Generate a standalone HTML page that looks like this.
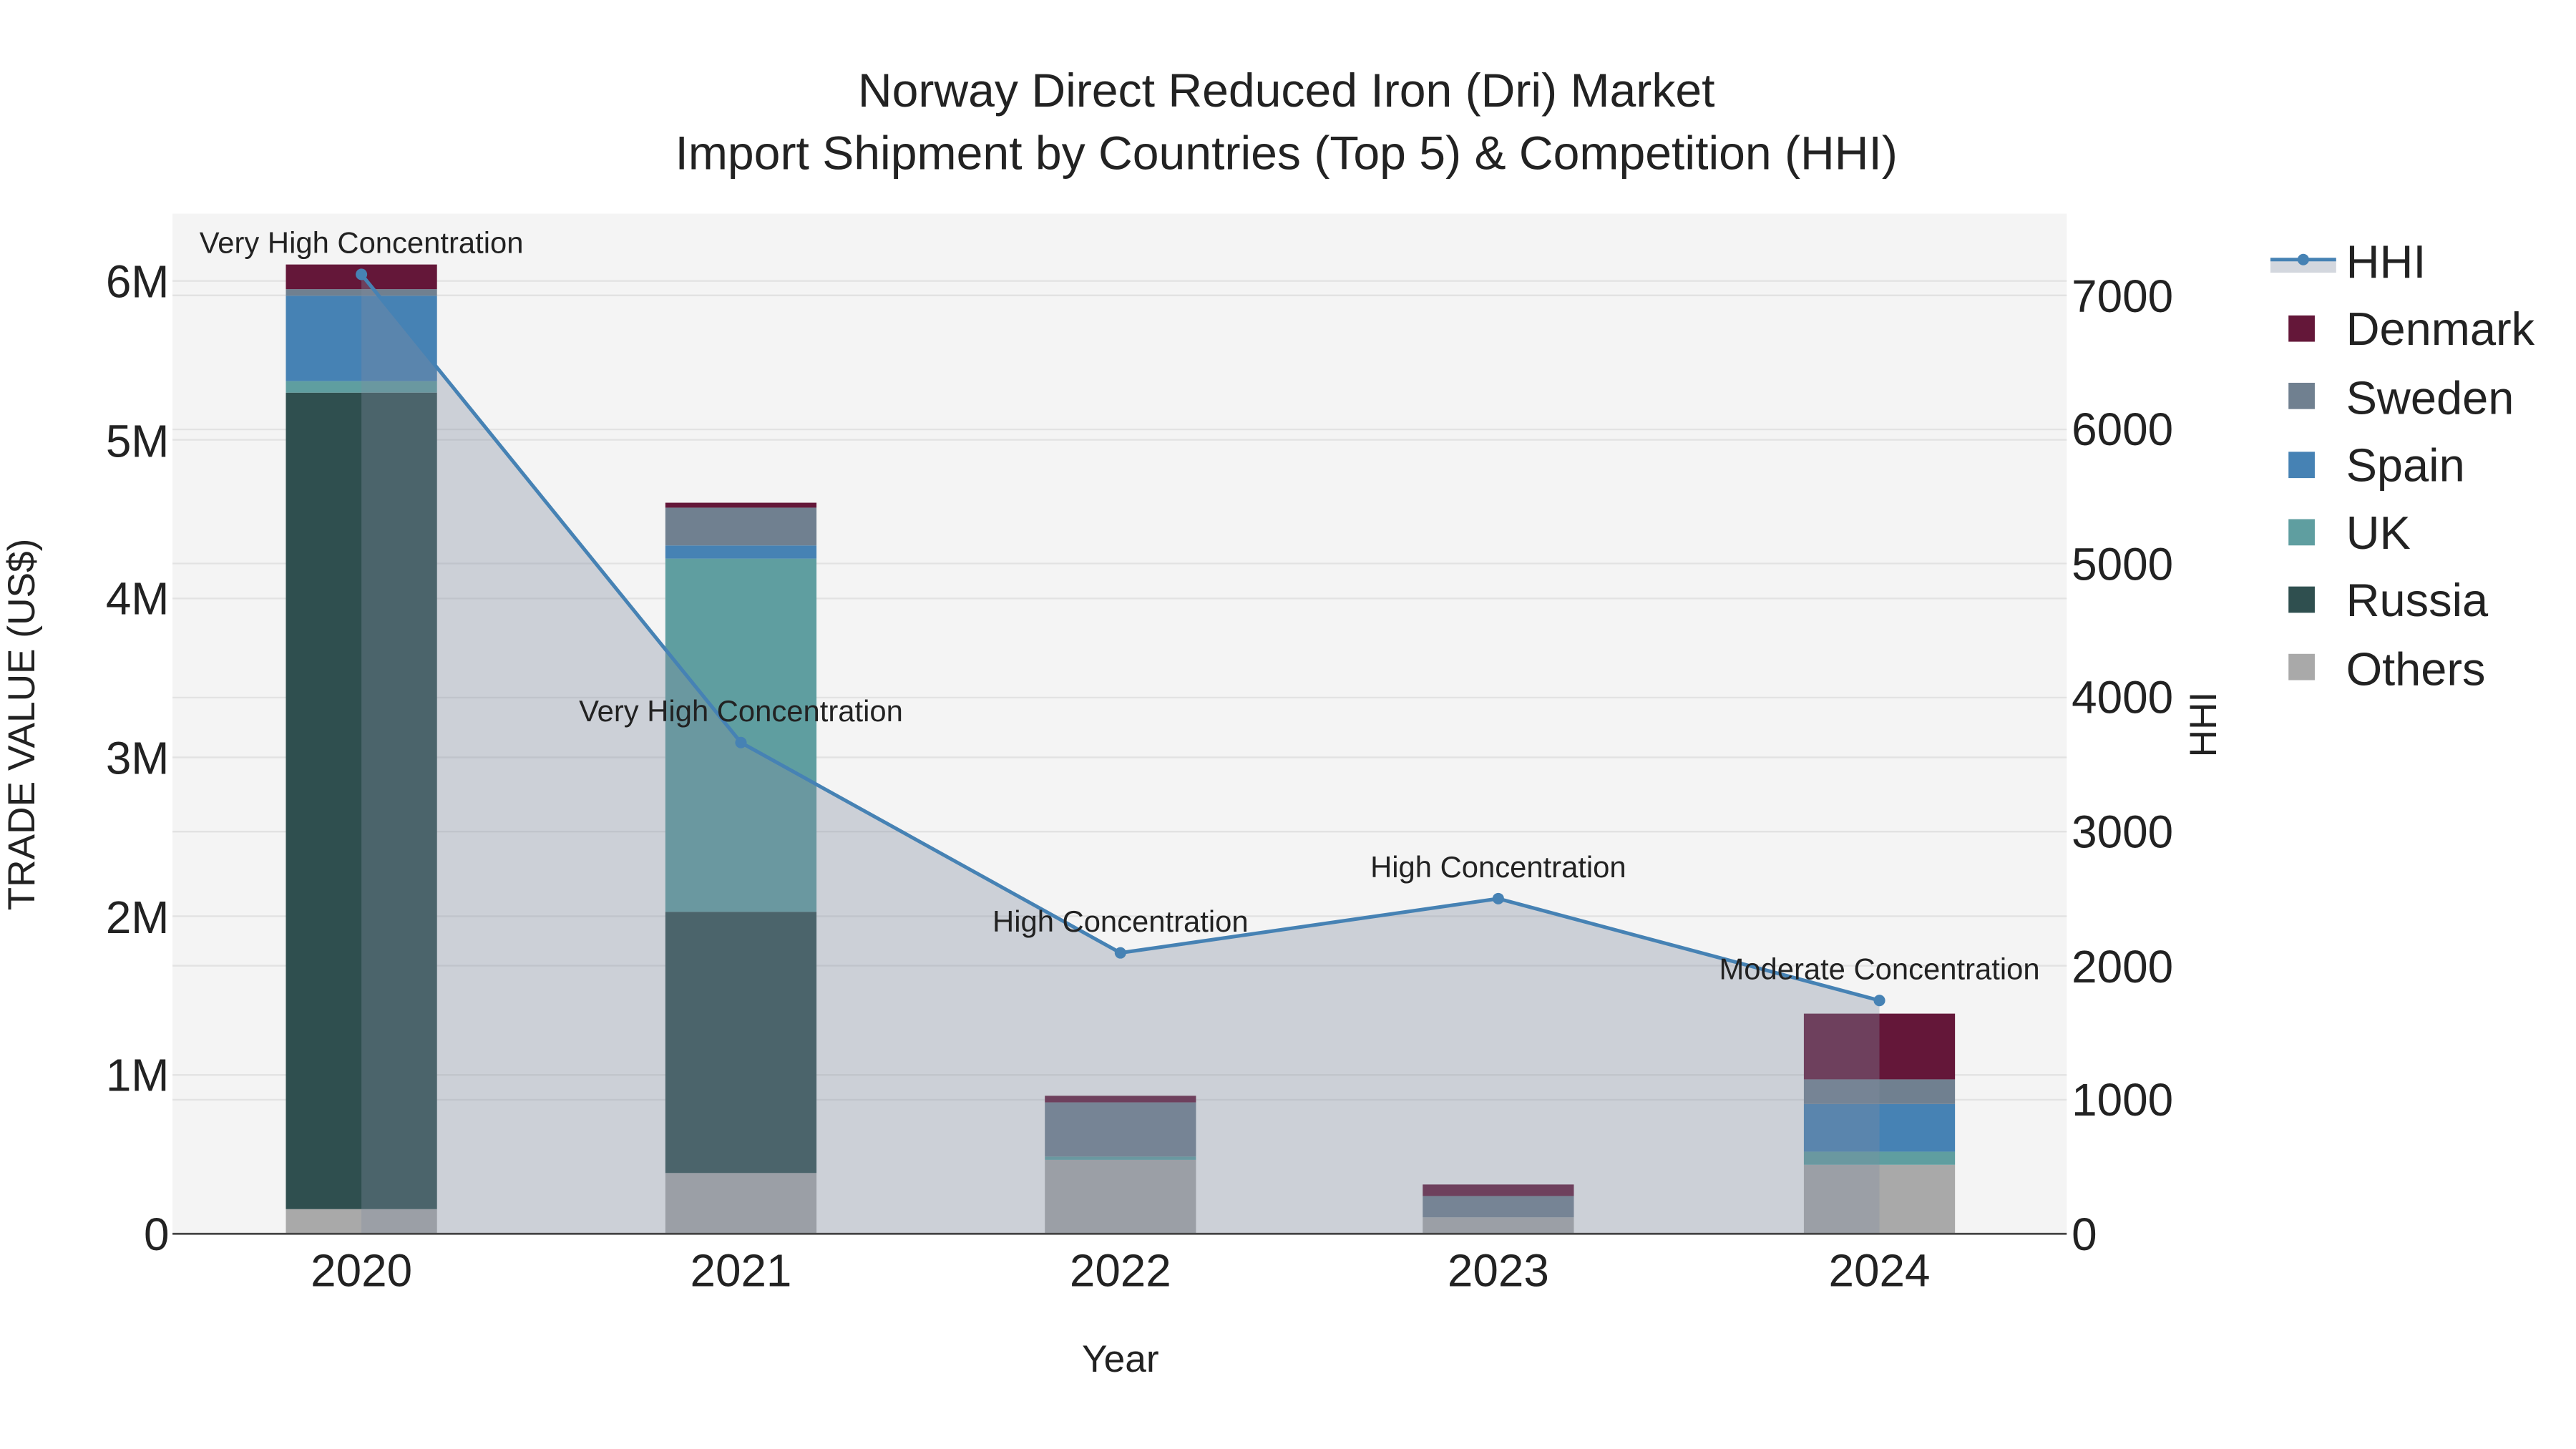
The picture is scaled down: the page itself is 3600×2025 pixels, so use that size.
<!DOCTYPE html>
<html><head><meta charset="utf-8"><style>
html,body{margin:0;padding:0;background:#fff;}
svg{display:block;}
text{font-family:"Liberation Sans",Arial,sans-serif;fill:#222;}
</style></head><body>
<svg width="3600" height="2025" viewBox="0 0 1568 882" xmlns="http://www.w3.org/2000/svg">
<rect x="0" y="0" width="1600" height="900" fill="#fff"/>
<rect x="105" y="130" width="1153" height="621" fill="#f4f4f4"/>
<g stroke="#e2e2e2" stroke-width="1">
<line x1="105" x2="1258" y1="654.3" y2="654.3"/><line x1="105" x2="1258" y1="557.7" y2="557.7"/>
<line x1="105" x2="1258" y1="461" y2="461"/><line x1="105" x2="1258" y1="364.3" y2="364.3"/>
<line x1="105" x2="1258" y1="267.7" y2="267.7"/><line x1="105" x2="1258" y1="171" y2="171"/>
<line x1="105" x2="1258" y1="669.4" y2="669.4"/><line x1="105" x2="1258" y1="587.8" y2="587.8"/>
<line x1="105" x2="1258" y1="506.2" y2="506.2"/><line x1="105" x2="1258" y1="424.6" y2="424.6"/>
<line x1="105" x2="1258" y1="343" y2="343"/><line x1="105" x2="1258" y1="261.4" y2="261.4"/>
<line x1="105" x2="1258" y1="179.8" y2="179.8"/>
</g>
<rect x="174" y="736" width="92" height="15" fill="#a9a9a9"/>
<rect x="174" y="239" width="92" height="497" fill="#2f4f4f"/>
<rect x="174" y="232" width="92" height="7" fill="#5f9ea0"/>
<rect x="174" y="180" width="92" height="52" fill="#4682b4"/>
<rect x="174" y="176" width="92" height="4" fill="#708090"/>
<rect x="174" y="161" width="92" height="15" fill="#641739"/>
<rect x="405" y="714" width="92" height="37" fill="#a9a9a9"/>
<rect x="405" y="555" width="92" height="159" fill="#2f4f4f"/>
<rect x="405" y="340" width="92" height="215" fill="#5f9ea0"/>
<rect x="405" y="332" width="92" height="8" fill="#4682b4"/>
<rect x="405" y="309" width="92" height="23" fill="#708090"/>
<rect x="405" y="306" width="92" height="3" fill="#641739"/>
<rect x="636" y="706" width="92" height="45" fill="#a9a9a9"/>
<rect x="636" y="704" width="92" height="2" fill="#5f9ea0"/>
<rect x="636" y="671" width="92" height="33" fill="#708090"/>
<rect x="636" y="667" width="92" height="4" fill="#641739"/>
<rect x="866" y="741" width="92" height="10" fill="#a9a9a9"/>
<rect x="866" y="728" width="92" height="13" fill="#708090"/>
<rect x="866" y="721" width="92" height="7" fill="#641739"/>
<rect x="1098" y="709" width="92" height="42" fill="#a9a9a9"/>
<rect x="1098" y="701" width="92" height="8" fill="#5f9ea0"/>
<rect x="1098" y="672" width="92" height="29" fill="#4682b4"/>
<rect x="1098" y="657" width="92" height="15" fill="#708090"/>
<rect x="1098" y="617" width="92" height="40" fill="#641739"/>
<polygon points="220,167 451,452 682,580 912,547 1144,609 1144,751 220,751" fill="rgba(130,140,160,0.35)"/>
<polyline points="220,167 451,452 682,580 912,547 1144,609" fill="none" stroke="#4682b4" stroke-width="2.2"/>
<g fill="#4682b4"><circle cx="220" cy="167" r="3.5"/><circle cx="451" cy="452" r="3.5"/><circle cx="682" cy="580" r="3.5"/><circle cx="912" cy="547" r="3.5"/><circle cx="1144" cy="609" r="3.5"/></g>
<line x1="105" x2="1258" y1="751" y2="751" stroke="#444" stroke-width="1.2"/>
<g font-size="18.2" text-anchor="middle">
<text x="220" y="154">Very High Concentration</text>
<text x="451" y="439">Very High Concentration</text>
<text x="682" y="567">High Concentration</text>
<text x="912" y="534">High Concentration</text>
<text x="1144" y="596">Moderate Concentration</text>
</g>
<g font-size="28.8" text-anchor="middle">
<text x="783" y="65">Norway Direct Reduced Iron (Dri) Market</text>
<text x="783" y="103">Import Shipment by Countries (Top 5) &amp; Competition (HHI)</text>
</g>
<g font-size="27.8" text-anchor="end">
<text x="103" y="761">0</text><text x="103" y="664">1M</text><text x="103" y="568">2M</text>
<text x="103" y="471">3M</text><text x="103" y="374">4M</text><text x="103" y="278">5M</text><text x="103" y="181">6M</text>
</g>
<g font-size="27.8" text-anchor="start">
<text x="1261" y="761">0</text><text x="1261" y="679">1000</text><text x="1261" y="598">2000</text>
<text x="1261" y="516">3000</text><text x="1261" y="434">4000</text><text x="1261" y="353">5000</text>
<text x="1261" y="271">6000</text><text x="1261" y="190">7000</text>
</g>
<g font-size="27.8" text-anchor="middle">
<text x="220" y="783">2020</text><text x="451" y="783">2021</text><text x="682" y="783">2022</text>
<text x="912" y="783">2023</text><text x="1144" y="783">2024</text>
</g>
<text x="682" y="835" font-size="23.2" text-anchor="middle">Year</text>
<text transform="translate(21,441) rotate(-90)" font-size="23.2" text-anchor="middle">TRADE VALUE (US$)</text>
<text transform="translate(1349,441) rotate(-90)" font-size="23.2" text-anchor="middle">HHI</text>
<rect x="1382" y="158" width="40" height="8" fill="rgba(130,140,160,0.35)"/>
<line x1="1382" x2="1422" y1="158" y2="158" stroke="#4682b4" stroke-width="2.2"/>
<circle cx="1402" cy="158" r="3.5" fill="#4682b4"/>
<rect x="1393" y="192" width="16" height="16" fill="#641739"/>
<rect x="1393" y="233" width="16" height="16" fill="#708090"/>
<rect x="1393" y="275" width="16" height="16" fill="#4682b4"/>
<rect x="1393" y="316" width="16" height="16" fill="#5f9ea0"/>
<rect x="1393" y="357" width="16" height="16" fill="#2f4f4f"/>
<rect x="1393" y="398" width="16" height="16" fill="#a9a9a9"/>
<g font-size="28.3">
<text x="1428" y="169">HHI</text><text x="1428" y="210">Denmark</text><text x="1428" y="252">Sweden</text>
<text x="1428" y="293">Spain</text><text x="1428" y="334">UK</text><text x="1428" y="375">Russia</text><text x="1428" y="417">Others</text>
</g>
</svg>
</body></html>
